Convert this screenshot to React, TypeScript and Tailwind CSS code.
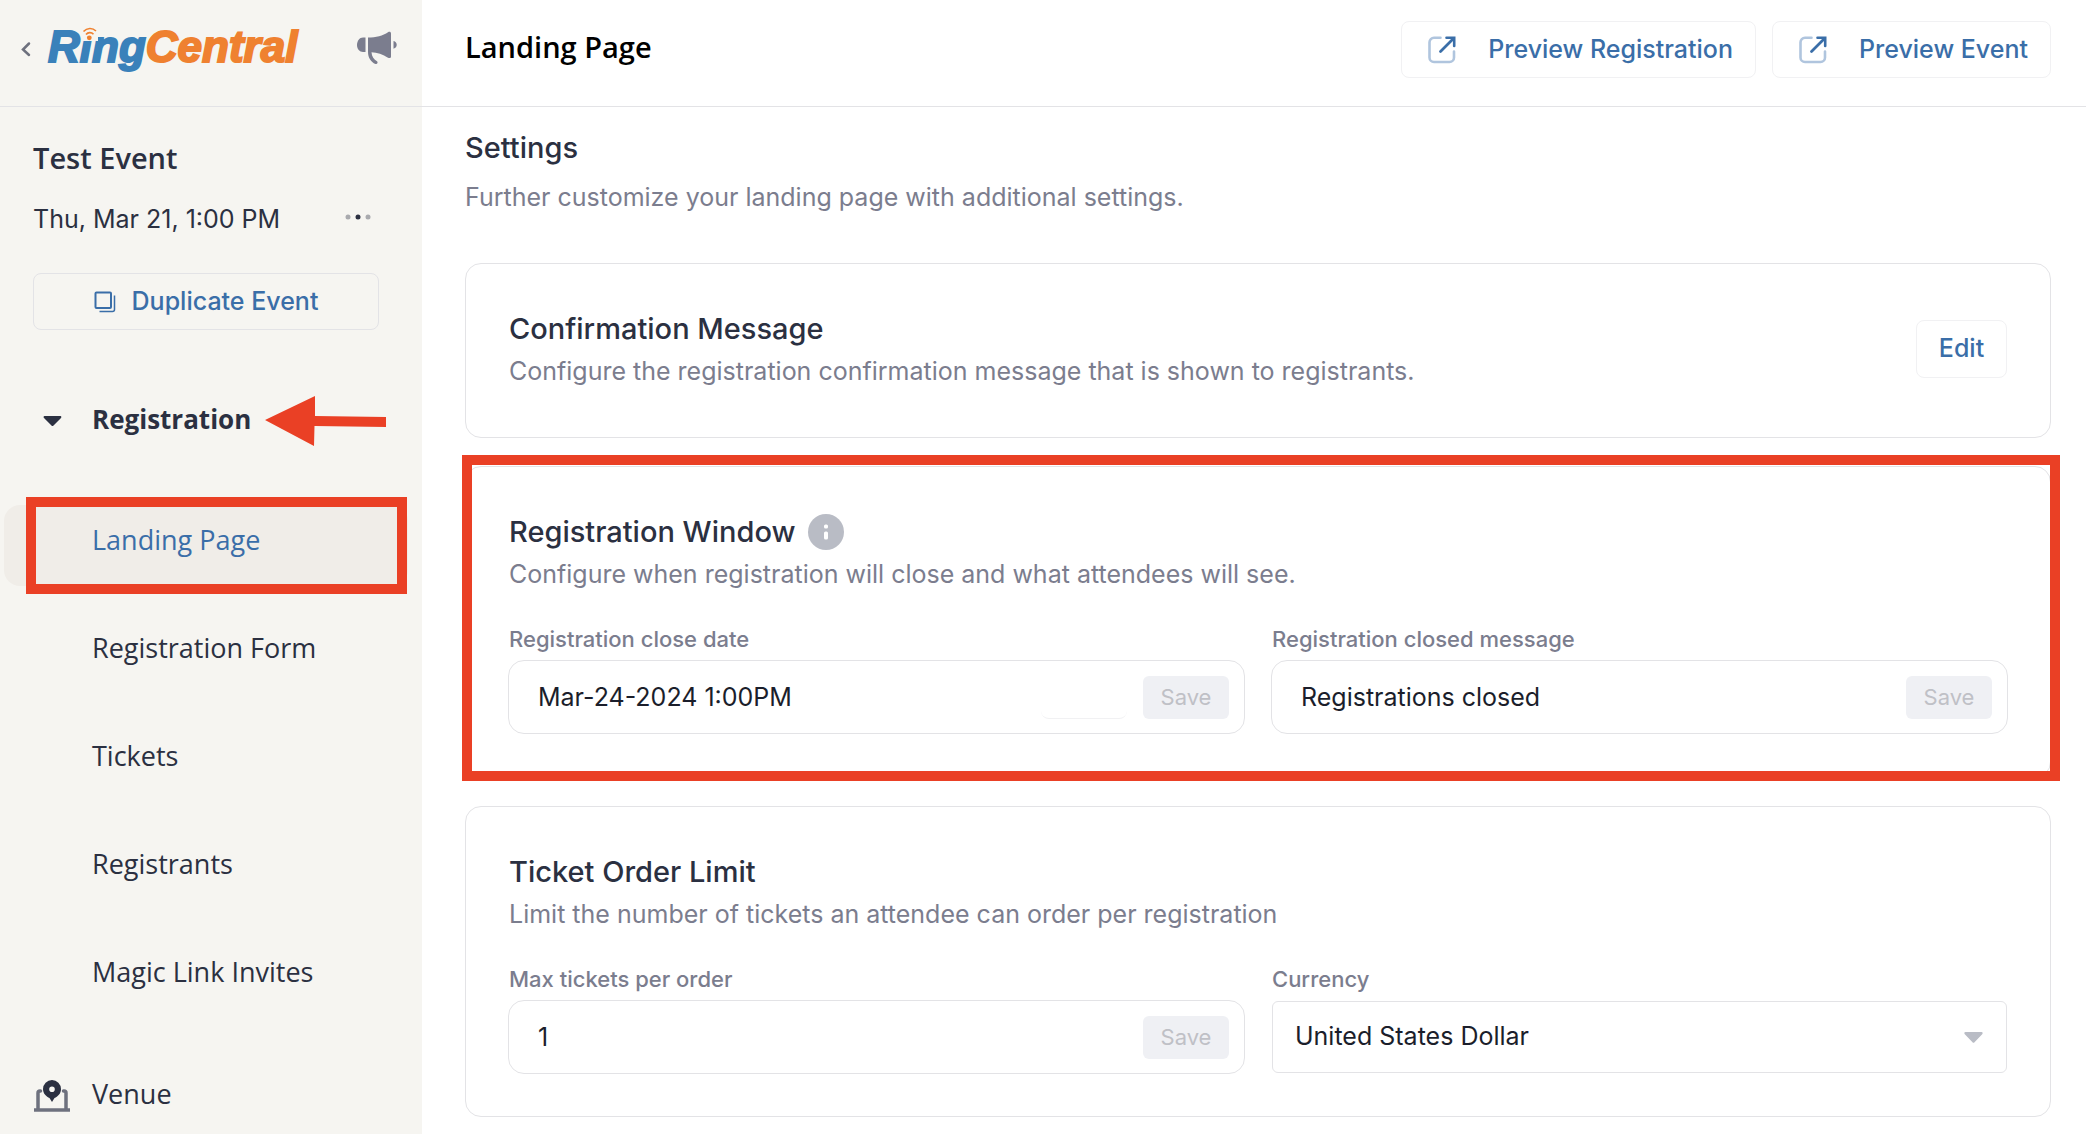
import React, { useState } from "react";

const navItems = [
  { label: "Landing Page", active: true },
  { label: "Registration Form" },
  { label: "Tickets" },
  { label: "Registrants" },
  { label: "Magic Link Invites" },
];

const MegaphoneIcon = () => (
  <svg width="42" height="36" viewBox="0 0 42 36" fill="#7b7d8e" aria-hidden="true">
    <path d="M9.5 6.5V21H7C3.500 21 1 18 1 14s2.500-7.500 6-7.500z" />
    <path d="M12 6.500C20 6.500 27 4.500 32 1.200C33.500 .2 35 .800 35 2.500V25.500C35 27 33.500 27.500 32 26.700C27 23.500 21 21.500 15.500 21.300C15.700 25.500 18 28.500 21 30.300C22.300 31.200 21.300 33.700 19.500 33C14.800 31 12 26.500 12 21z" />
    <path d="M37.500 10C39.700 10.500 40.700 12 40.700 13.700S39.700 17 37.500 17.700z" />
  </svg>
);

const DuplicateIcon = () => (
  <svg width="22" height="22" viewBox="0 0 22 22" fill="none" stroke="#3a6ea8" strokeWidth="2" aria-hidden="true">
    <rect x="1.500" y="1.500" width="15.500" height="15.500" rx="1" />
    <path d="M20.500 4.500V18.500a2 2 0 0 1-2 2H5.500" strokeWidth="1.500" />
  </svg>
);

const PreviewIcon = () => (
  <svg width="28" height="28" viewBox="0 0 28 28" fill="none" aria-hidden="true">
    <path d="M12.500 1.800H6A4.500 4.500 0 0 0 1.500 6.300v15.200A4.500 4.500 0 0 0 6 26h15.500a4.500 4.500 0 0 0 4.500-4.500V15.500" stroke="#b0c5de" strokeWidth="2.600" strokeLinecap="round" />
    <path d="M12.500 15.500L24.500 3.500" stroke="#3a6ea8" strokeWidth="2.800" strokeLinecap="round" />
    <path d="M18.500 1.700H26.200V10" stroke="#3a6ea8" strokeWidth="2.600" strokeLinecap="round" />
  </svg>
);

const VenueIcon = () => (
  <svg width="36" height="32" viewBox="0 0 36 32" aria-hidden="true">
    <path d="M6.500 11H6a2 2 0 0 0-2 2V29M29.500 11h.5a2 2 0 0 1 2 2V29" fill="none" stroke="#6e717e" strokeWidth="3.500" strokeLinecap="round" />
    <path d="M0 30h36" stroke="#6e717e" strokeWidth="3.500" />
    <path fillRule="evenodd" d="M18 0a9 9 0 0 1 9 9c0 5-3.500 7.500-6.500 9L18 22l-2.500-4C12.500 16.500 9 14 9 9a9 9 0 0 1 9-9zm0 6.500a2.800 2.800 0 1 0 0 5.600a2.800 2.800 0 0 0 0-5.600z" fill="#2b3041" />
  </svg>
);

const Logo = () => (
  <a href="#home" className="relative block whitespace-nowrap font-['Liberation_Sans',Arial,sans-serif] text-[44px] leading-[50px] font-bold italic text-[#3a81ba]">
    <span className="[-webkit-text-stroke:2px_#3a81ba]">Ring</span>
    <span className="text-[#ef8130] [-webkit-text-stroke:2px_#ef8130]">Central</span>
    {/* signal waves sit over the dot of the i */}
    <svg className="absolute top-[5px] left-[34px]" width="16" height="14" viewBox="0 0 16 14" fill="none" aria-hidden="true">
      <path d="M0 0H16V14H0z" fill="#f6f5f1" />
      <path d="M1.500 4.500C5 .5 10.500 .5 14 4" stroke="#ef8130" strokeWidth="1.600" />
      <path d="M4 7.500C6 5 9.500 5 11.500 7.200" stroke="#ef8130" strokeWidth="1.600" />
      <circle cx="7.300" cy="10.800" r="2.400" fill="#ef8130" />
    </svg>
  </a>
);

const Sidebar = () => (
  <aside className="w-[422px] shrink-0 bg-[#f6f5f1]">
    <div className="flex h-[107px] items-start border-b border-[#e3e3e6] pt-[22px] pl-[20px]">
      <button type="button" aria-label="Back" className="mt-[19px] mr-[16px]">
        <svg width="12" height="16" viewBox="0 0 12 16" fill="none" stroke="#6e717e" strokeWidth="2.500" strokeLinecap="round" aria-hidden="true">
          <path d="M9 2.500L3 8.500L9 14" />
        </svg>
      </button>
      <Logo />
      <button type="button" aria-label="Announcements" className="mt-[9px] mr-[24px] ml-auto">
        <MegaphoneIcon />
      </button>
    </div>

    <div className="pt-[31px] pr-[43px] pl-[33px]">
      <h2 className="font-['Open_Sans',sans-serif] text-[29px] leading-[40px] font-semibold">Test Event</h2>
      <div className="mt-[23px] flex items-center justify-between">
        <p className="text-[25px] leading-[36px]">Thu, Mar 21, 1:00 PM</p>
        <button type="button" aria-label="More options" className="mr-[8px] mb-1">
          <svg width="26" height="6" viewBox="0 0 26 6" aria-hidden="true">
            <circle cx="3" cy="3" r="2.500" fill="#a9aaae" />
            <circle cx="13" cy="3" r="2.500" fill="#2b3041" />
            <circle cx="23" cy="3" r="2.500" fill="#a9aaae" />
          </svg>
        </button>
      </div>
      <button type="button" className="mt-[36px] flex h-[57px] w-full items-center justify-center gap-4 rounded-[8px] border border-[#e3e3e6] text-[25px] font-medium text-[#3a6ea8]">
        <DuplicateIcon />
        Duplicate Event
      </button>
    </div>

    <nav className="pt-[69px] font-['Open_Sans',sans-serif] text-[27px] leading-[40px]">
      <div className="flex items-center">
        <button type="button" aria-expanded="true" className="flex items-center text-[26px] font-bold">
          <svg className="mt-1 mr-[30px] ml-[43px]" width="19" height="12" viewBox="0 0 19 12" fill="#2b3041" aria-hidden="true">
            <path d="M1.500 1H17.500C18.500 1 18.500 2.500 18 3L10.500 10.500C9.800 11.200 9 11.200 8.500 10.500L1 3C.3 2.300 .5 1 1.500 1z" />
          </svg>
          Registration
        </button>
        <svg className="-mt-[3px] -mb-[7px] ml-[14px]" width="122" height="50" viewBox="0 0 122 50" fill="#ea4025" aria-hidden="true">
          <path d="M0 24L50 0V20L121 21V31L49.500 30L49 50z" />
        </svg>
      </div>
      <ul className="mt-[47px] flex flex-col">
        {navItems.map((item) => (
          <li key={item.label} className="relative flex h-[108px] items-center">
            {item.active && <span className="absolute top-[19px] right-[14px] left-1 h-[81px] rounded-[16px] bg-[#f0ede8]" />}
            <a href="#nav" className={`relative ml-[92px] ${item.active ? "text-[#3a6ea8]" : ""}`}>
              {item.label}
            </a>
            {item.active && <span className="absolute top-[11px] right-[15px] left-[26px] h-[97px] border-[10px] border-[#ea4025]" />}
          </li>
        ))}
      </ul>
      <a href="#venue" className="flex items-center pt-[48px] pl-[34px]">
        <span className="mt-1 mr-[22px]">
          <VenueIcon />
        </span>
        Venue
      </a>
    </nav>
  </aside>
);

const PreviewLink = ({ label }: { label: string }) => (
  <a href="#preview" className="flex h-[57px] items-center gap-[32px] rounded-[8px] border border-[#f1f1f3] pr-[22px] pl-[26px] text-[25px] font-medium text-[#3a6ea8]">
    <PreviewIcon />
    {label}
  </a>
);

const CardHeading = ({ title, text, info }: { title: string; text: string; info?: boolean }) => (
  <div>
    <div className="flex items-center gap-[13px]">
      <h3 className="text-[29px] leading-[40px] font-medium">{title}</h3>
      {info && (
        <button type="button" aria-label={`About ${title}`}>
          <svg width="36" height="36" viewBox="0 0 36 36" aria-hidden="true">
            <circle cx="18" cy="18" r="18" fill="#b9bcc5" />
            <rect x="16" y="10.500" width="4" height="4" rx="1.500" fill="#fff" />
            <rect x="16" y="17.500" width="4" height="8" rx="1.500" fill="#fff" />
          </svg>
        </button>
      )}
    </div>
    <p className="mt-[4px] text-[25px] leading-[36px] text-[#7b7d8e]">{text}</p>
  </div>
);

interface SaveFieldProps {
  id: string;
  label: string;
  initial: string;
  clearable?: boolean;
}

const SaveField = ({ id, label, initial, clearable }: SaveFieldProps) => {
  const [value, setValue] = useState(initial);

  return (
    <div className="min-w-0 flex-1">
      <label htmlFor={id} className="block text-[22px] leading-[28px] font-medium text-[#7b7d8e]">
        {label}
      </label>
      <div className="-mx-px mt-[7px] flex h-[74px] items-center rounded-[16px] border border-[#e3e3e6] pr-[15px] pl-[29px]">
        <input
          id={id}
          value={value}
          onChange={(e) => setValue(e.target.value)}
          className="min-w-0 flex-1 bg-transparent text-[25px] leading-[36px] text-[#1b1e2b] outline-none"
        />
        {clearable && <span className="mr-[16px] h-[43px] w-[86px] rounded-[8px] border-b border-[#f1f1f3]" />}
        <button type="button" disabled={value === initial} className="h-[43px] w-[86px] rounded-[6px] bg-[#eff0f4] text-[22px] text-[#bfc0c6]">
          Save
        </button>
      </div>
    </div>
  );
};

const Settings = () => (
  <section className="pt-[21px] pr-[35px] pl-[43px]">
    <h2 className="text-[29px] leading-[40px] font-medium">Settings</h2>
    <p className="mt-[11px] text-[25px] leading-[36px] text-[#7b7d8e]">Further customize your landing page with additional settings.</p>

    <div className="mt-[48px] flex flex-col gap-[28px]">
      <div className="flex items-center justify-between rounded-[16px] border border-[#e3e3e6] px-[43px] pt-[45px] pb-[48px]">
        <CardHeading title="Confirmation Message" text="Configure the registration confirmation message that is shown to registrants." />
        <button type="button" className="h-[58px] w-[91px] rounded-[8px] border border-[#f1f1f3] text-[25px] font-medium text-[#3a6ea8]">
          Edit
        </button>
      </div>

      <div className="relative rounded-[16px] border border-[#e3e3e6] px-[43px] pt-[45px] pb-[43px]">
        <CardHeading title="Registration Window" text="Configure when registration will close and what attendees will see." info />
        <div className="mt-[33px] flex gap-[28px]">
          <SaveField id="close-date" label="Registration close date" initial="Mar-24-2024 1:00PM" clearable />
          <SaveField id="closed-message" label="Registration closed message" initial="Registrations closed" />
        </div>
        <span className="pointer-events-none absolute -top-[12px] -right-[10px] -bottom-[4px] -left-[4px] border-[10px] border-[#ea4025]" />
      </div>

      <div className="rounded-[16px] border border-[#e3e3e6] px-[43px] pt-[45px] pb-[42px]">
        <CardHeading title="Ticket Order Limit" text="Limit the number of tickets an attendee can order per registration" />
        <div className="mt-[33px] flex gap-[28px]">
          <SaveField id="max-tickets" label="Max tickets per order" initial="1" />
          <div className="min-w-0 flex-1">
            <label htmlFor="currency" className="block text-[22px] leading-[28px] font-medium text-[#7b7d8e]">
              Currency
            </label>
            <div className="relative mt-[8px]">
              <select id="currency" className="h-[72px] w-full appearance-none rounded-[6px] border border-[#e3e3e6] bg-white px-[22px] text-[25px] text-[#1b1e2b]">
                <option>United States Dollar</option>
                <option>Euro</option>
                <option>British Pound</option>
              </select>
              <svg className="pointer-events-none absolute top-[31px] right-[24px]" width="19" height="11" viewBox="0 0 19 11" fill="#b9bcc5" aria-hidden="true">
                <path d="M1.500 0H17.500C18.800 0 19 1.500 18.200 2.300L10.500 10.300C9.900 11 9.100 11 8.500 10.300L.8 2.300C0 1.500 .2 0 1.500 0z" />
              </svg>
            </div>
          </div>
        </div>
      </div>
    </div>
  </section>
);

export default function App() {
  return (
    <div className="flex min-h-screen bg-white font-['Inter',sans-serif] text-[#2b3041]">
      <Sidebar />
      <main className="min-w-0 flex-1">
        <header className="flex h-[107px] items-start justify-between border-b border-[#e3e3e6] pr-[35px] pl-[43px]">
          <h1 className="mt-[27px] font-['Open_Sans',sans-serif] text-[29px] leading-[40px] font-semibold text-black">Landing Page</h1>
          <div className="mt-[21px] flex gap-4">
            <PreviewLink label="Preview Registration" />
            <PreviewLink label="Preview Event" />
          </div>
        </header>
        <Settings />
      </main>
    </div>
  );
}
